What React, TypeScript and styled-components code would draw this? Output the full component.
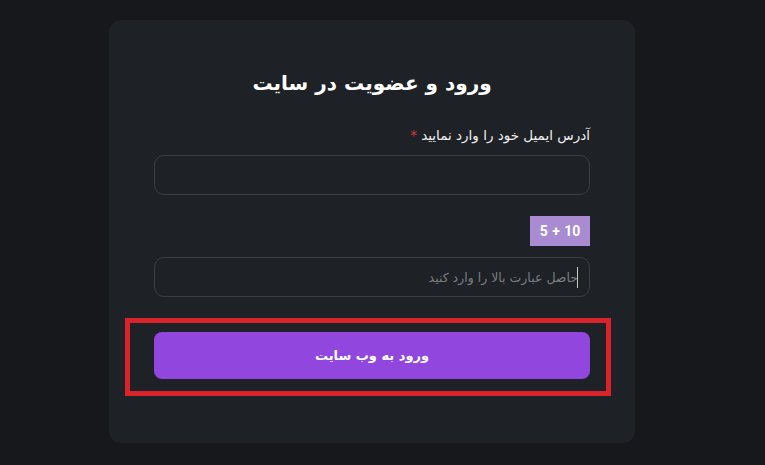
import React from 'react';
import styled, { createGlobalStyle } from 'styled-components';

const GlobalStyle = createGlobalStyle`
  html, body {
    margin: 0;
    padding: 0;
    background: #16181b;
    font-family: 'DejaVu Sans', 'Noto Sans', sans-serif;
  }
  * { box-sizing: border-box; }
`;

const App = () => {
  return (
    <Page>
      <GlobalStyle />
      <Card dir="rtl">
        <Title>ورود و عضویت در سایت</Title>

        <Field>
          <Label>
            آدرس ایمیل خود را وارد نمایید <Required>*</Required>
          </Label>
          <Input type="email" />
        </Field>

        <Captcha>5 + 10</Captcha>

        <CaretWrap>
          <Input placeholder="حاصل عبارت بالا را وارد کنید" />
          <Caret />
        </CaretWrap>

        <Highlight>
          <SubmitButton type="button">ورود به وب سایت</SubmitButton>
        </Highlight>
      </Card>
    </Page>
  );
};

const Page = styled.div`
  width: 765px;
  height: 465px;
  display: flex;
  justify-content: flex-start;
  padding: 20px 0 0 109px;
  background: #16181b;
`;

const Card = styled.div`
  width: 526px;
  height: 423px;
  background: #1e2126;
  border-radius: 12px;
  padding: 50px 45px 0;
  display: flex;
  flex-direction: column;
`;

const Title = styled.h1`
  margin: 0;
  text-align: center;
  color: #ffffff;
  font-size: 20px;
  font-weight: 700;
  line-height: 26px;
`;

const Field = styled.div`
  display: flex;
  flex-direction: column;
  gap: 10px;
  margin-top: 29px;
`;

const Label = styled.label`
  color: #f1f1f1;
  font-size: 13.5px;
  line-height: 20px;
  text-align: right;
`;

const Required = styled.span`
  color: #d9363e;
`;

const Input = styled.input`
  width: 100%;
  height: 40px;
  background: #1e2126;
  border: 1px solid #3b3e44;
  border-radius: 10px;
  color: #e6e6e6;
  padding: 0 11px;
  font-family: 'DejaVu Sans', sans-serif;
  font-size: 12.5px;
  text-align: right;
  outline: none;

  &::placeholder {
    color: #7b7e84;
  }
`;

const Captcha = styled.div`
  align-self: flex-start;
  margin-top: 21px;
  width: 60px;
  height: 30px;
  background: #a88bd0;
  color: #ffffff;
  font-family: Roboto, 'Liberation Sans', sans-serif;
  font-size: 14px;
  font-weight: 700;
  word-spacing: 1px;
  display: flex;
  align-items: center;
  justify-content: center;
  direction: ltr;
`;

const CaretWrap = styled.div`
  position: relative;
  margin-top: 11px;
`;

const Caret = styled.span`
  position: absolute;
  right: 12px;
  top: 10px;
  width: 1px;
  height: 21px;
  background: #c9c9c9;
`;

const Highlight = styled.div`
  margin: 21px -21px 0 -29px;
  border: 5px solid #d9222a;
  padding: 9px 16px 12px 24px;
`;

const SubmitButton = styled.button`
  width: 100%;
  height: 47px;
  border: none;
  border-radius: 8px;
  background: #9146de;
  color: #ffffff;
  font-family: 'DejaVu Sans', sans-serif;
  font-size: 13px;
  font-weight: 700;
  cursor: pointer;
`;

export default App;
